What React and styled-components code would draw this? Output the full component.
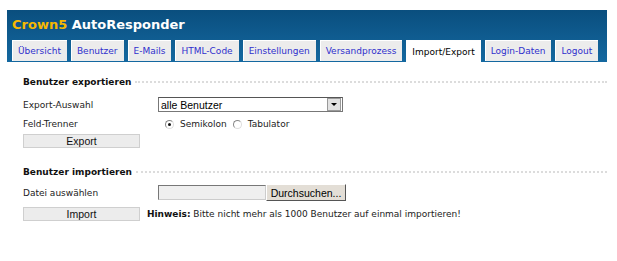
import styled, { createGlobalStyle } from "styled-components"

const Global = createGlobalStyle`
    body {
        margin: 0;
        background: #fff;
        font-family: "DejaVu Sans", Verdana, sans-serif;
    }
`

const Page = styled.div`
    width: 617px;
    padding: 10px 10px 0 7px;
    box-sizing: border-box;
`

const Header = styled.div`
    background: linear-gradient(#0a4e7e, #1468a0);
    height: 52px;
    display: flex;
    flex-direction: column;
    justify-content: space-between;
`

const Title = styled.div`
    font-size: 13px;
    font-weight: bold;
    color: #fff;
    padding: 7px 0 0 5px;
    span { color: #f6b800; }
`

const Tabs = styled.div`
    display: flex;
    gap: 4px;
    padding-left: 5px;
`

const Tab = styled.div`
    flex-shrink: 0;
    white-space: nowrap;
    padding: 0 6px 0 5px;
    display: flex;
    align-items: center;
    font-size: 9px;
    color: ${(p) => (p.active ? "#000" : "#2f2fcc")};
    background: ${(p) => (p.active ? "#fff" : "#ececec")};
    border-top: 1px solid #fff;
    border-left: 1px solid #fff;
    box-sizing: border-box;
    height: ${(p) => (p.active ? "23px" : "21px")};
    margin-bottom: ${(p) => (p.active ? "-1px" : "1px")};
`

const Content = styled.div`
    padding: 12px 0 0 16px;
`

const Legend = styled.div`
    display: flex;
    align-items: center;
    gap: 4px;
    font-size: 9px;
    font-weight: bold;
    color: #111;
    height: 16px;
    margin-bottom: 4px;
    &::after {
        content: "";
        flex: 1;
        border-top: 2px dotted #dcdcdc;
    }
`

const Row = styled.div`
    display: flex;
    align-items: center;
    height: ${(p) => p.h || 21}px;
`

const Label = styled.div`
    width: 135px;
    font-size: 9px;
    color: #222;
`

const Select = styled.div`
    width: 185px;
    height: 15px;
    border: 1px solid #777;
    border-top-color: #555;
    display: flex;
    align-items: center;
    justify-content: space-between;
    font-family: "Liberation Sans", Arial, sans-serif;
    font-size: 10.5px;
    color: #000;
    padding-left: 2px;
    box-sizing: border-box;
`

const Arrow = styled.div`
    width: 12px;
    height: 11px;
    margin-right: 1px;
    background: #e2e2e2;
    border: 1px solid #999;
    display: flex;
    align-items: center;
    justify-content: center;
    &::before {
        content: "";
        border-left: 3px solid transparent;
        border-right: 3px solid transparent;
        border-top: 3px solid #000;
    }
`

const Radios = styled.div`
    display: flex;
    align-items: center;
    padding-left: 7px;
    font-size: 9px;
    color: #222;
`

const Radio = styled.span`
    width: 7px;
    height: 7px;
    border-radius: 50%;
    border: 1px solid #888;
    border-right-color: #ddd;
    border-bottom-color: #ddd;
    margin-right: 6px;
    display: inline-flex;
    align-items: center;
    justify-content: center;
    &::before {
        content: "";
        width: 3px;
        height: 3px;
        border-radius: 50%;
        background: ${(p) => (p.checked ? "#111" : "transparent")};
    }
`

const RadioText = styled.span`
    margin-right: 6px;
`

const Button = styled.div`
    width: 117px;
    height: 14px;
    flex-shrink: 0;
    background: #ececec;
    border: 1px solid #cfcfcf;
    box-sizing: border-box;
    display: flex;
    align-items: center;
    justify-content: center;
    font-family: "Liberation Sans", Arial, sans-serif;
    font-size: 10.5px;
    color: #111;
`

const FileBox = styled.div`
    width: 108px;
    height: 15px;
    border: 1px solid #777;
    border-right-color: #ccc;
    border-bottom-color: #ccc;
    background: #efefef;
    box-sizing: border-box;
`

const Browse = styled.div`
    width: 80px;
    height: 17px;
    background: #e3ded6;
    border: 1px solid #fff;
    border-right-color: #555;
    border-bottom-color: #555;
    box-sizing: border-box;
    display: flex;
    align-items: center;
    justify-content: center;
    font-family: "Liberation Sans", Arial, sans-serif;
    font-size: 10.5px;
    color: #000;
`

const Hint = styled.div`
    font-size: 9px;
    color: #222;
    margin-left: 7px;
    white-space: nowrap;
    b { color: #111; }
`

const Section = styled.div`
    margin-bottom: ${(p) => p.mb || 0}px;
`

const tabs = ["Übersicht", "Benutzer", "E-Mails", "HTML-Code", "Einstellungen", "Versandprozess", "Import/Export", "Login-Daten", "Logout"]

export default function App() {
    return (
        <>
            <Global />
            <Page>
                <Header>
                    <Title><span>Crown5</span> AutoResponder</Title>
                    <Tabs>
                        {tabs.map((t) => (
                            <Tab key={t} active={t === "Import/Export"}>{t}</Tab>
                        ))}
                    </Tabs>
                </Header>
                <Content>
                    <Section mb={15}>
                        <Legend>Benutzer exportieren</Legend>
                        <Row h={21}>
                            <Label>Export-Auswahl</Label>
                            <Select>alle Benutzer<Arrow /></Select>
                        </Row>
                        <Row h={18}>
                            <Label>Feld-Trenner</Label>
                            <Radios>
                                <Radio checked /><RadioText>Semikolon</RadioText>
                                <Radio /><RadioText>Tabulator</RadioText>
                            </Radios>
                        </Row>
                        <Row h={16}>
                            <Button>Export</Button>
                        </Row>
                    </Section>
                    <Section>
                        <Legend>Benutzer importieren</Legend>
                        <Row h={17}>
                            <Label>Datei auswählen</Label>
                            <FileBox />
                            <Browse>Durchsuchen...</Browse>
                        </Row>
                        <Row h={26}>
                            <Button>Import</Button>
                            <Hint><b>Hinweis:</b> Bitte nicht mehr als 1000 Benutzer auf einmal importieren!</Hint>
                        </Row>
                    </Section>
                </Content>
            </Page>
        </>
    )
}
